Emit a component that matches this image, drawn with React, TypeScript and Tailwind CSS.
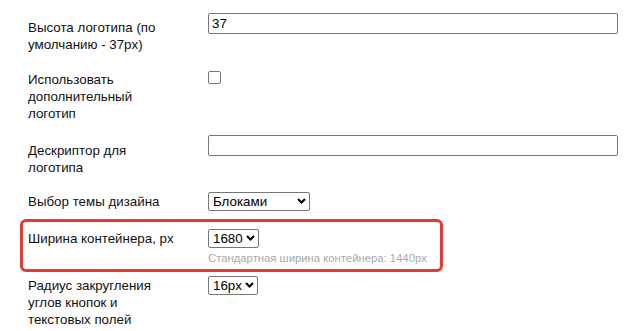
import React from "react";

const Chevron: React.FC = () => (
  <svg
    className="pointer-events-none absolute right-[4px] top-[6px]"
    width="9"
    height="6"
    viewBox="0 0 9 6"
  >
    <path d="M1 1 L4.5 4.5 L8 1" fill="none" stroke="#000" strokeWidth="2" />
  </svg>
);

const Select: React.FC<{ value: string; options: string[]; width: string }> = ({
  value,
  options,
  width,
}) => (
  <div className={`relative ${width}`}>
    <select
      defaultValue={value}
      className="w-full h-[19px] appearance-none border border-[#767676] rounded-[2px] bg-white pl-[4px] text-[13.33px] leading-[17px] text-black"
    >
      {options.map((o) => (
        <option key={o}>{o}</option>
      ))}
    </select>
    <Chevron />
  </div>
);

export default function App() {
  return (
    <div className="w-[644px] h-[331px] overflow-hidden bg-white pt-[13px] font-['Liberation_Sans',Arial,sans-serif] text-[13.33px] text-[#111]">
      {/* Высота логотипа */}
      <div className="flex items-start pl-[28px]">
        <label className="w-[180px] pr-[30px] pt-[6px] leading-[17px]">
          Высота логотипа (по умолчанию - 37px)
        </label>
        <input
          type="text"
          defaultValue="37"
          className="w-[410px] h-[21px] border border-[#767676] rounded-[2px] px-[3px] text-[13.33px] text-black"
        />
      </div>

      {/* Доп. логотип */}
      <div className="mt-[18px] flex items-start pl-[28px]">
        <label className="w-[180px] pr-[30px] leading-[17px]">
          Использовать дополнительный логотип
        </label>
        <input
          type="checkbox"
          className="w-[13px] h-[13px] appearance-none border border-[#767676] rounded-[2px] bg-white"
        />
      </div>

      {/* Дескриптор */}
      <div className="mt-[13px] flex items-start pl-[28px]">
        <label className="w-[180px] pr-[30px] pt-[7px] leading-[17px]">
          Дескриптор для логотипа
        </label>
        <input
          type="text"
          className="w-[410px] h-[21px] border border-[#767676] rounded-[2px] px-[3px] text-[13.33px] text-black"
        />
      </div>

      {/* Тема */}
      <div className="mt-[16px] flex items-start pl-[28px]">
        <label className="w-[180px] pr-[30px] pt-[1px] leading-[17px]">
          Выбор темы дизайна
        </label>
        <Select value="Блоками" options={["Блоками", "Списком"]} width="w-[102px]" />
      </div>

      {/* Ширина контейнера (выделено) */}
      <div className="mt-[7px] ml-[20px] w-[423px] border-[3px] border-[#e53935] rounded-[6px] pl-[5px] pt-[7px] pb-[4px] flex items-start">
        <label className="w-[180px] pr-[30px] pt-[1px] leading-[17px]">
          Ширина контейнера, px
        </label>
        <div className="flex flex-col">
          <Select value="1680" options={["1280", "1440", "1680", "1920"]} width="w-[51px]" />
          <span className="mt-[2px] whitespace-nowrap text-[11.3px] leading-[14px] text-[#a8a8a8]">
            Стандартная ширина контейнера: 1440px
          </span>
        </div>
      </div>

      {/* Радиус */}
      <div className="mt-[4px] flex items-start pl-[28px]">
        <label className="w-[180px] pr-[30px] pt-[1px] leading-[17px]">
          Радиус закругления углов кнопок и текстовых полей
        </label>
        <Select value="16px" options={["0px", "4px", "8px", "16px"]} width="w-[50px]" />
      </div>
    </div>
  );
}
